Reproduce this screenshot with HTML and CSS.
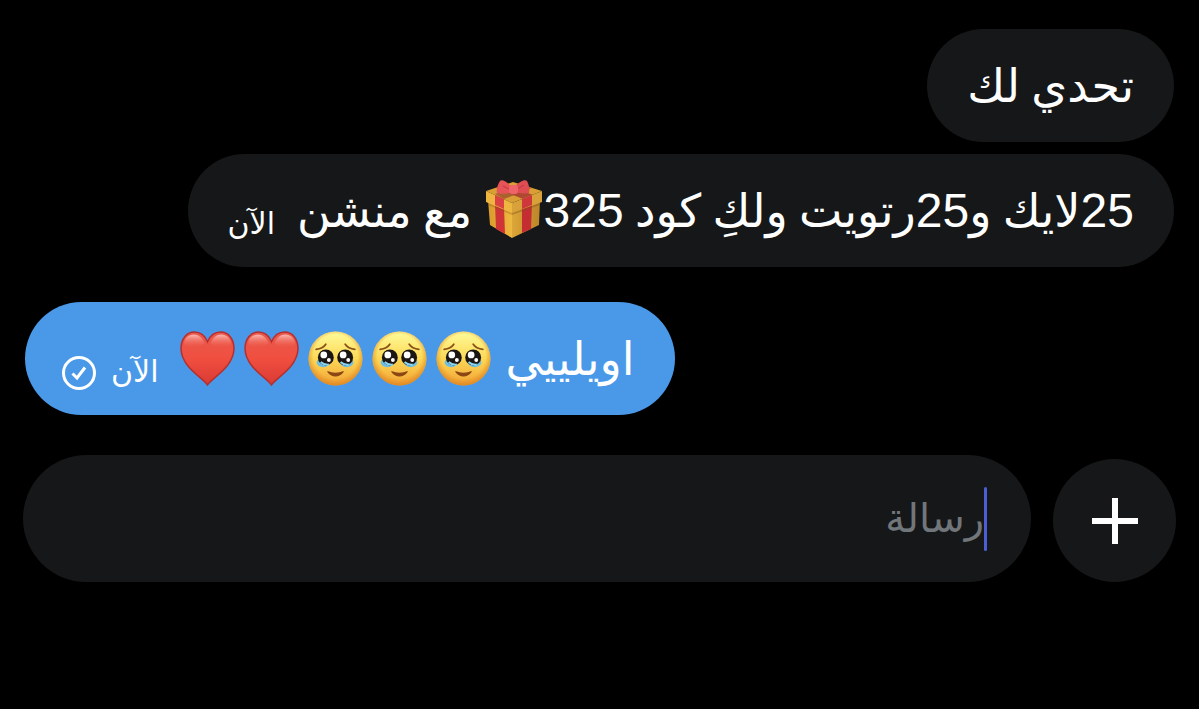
FILE: index.html
```html
<!DOCTYPE html>
<html lang="ar" dir="rtl">
<head>
    <meta charset="UTF-8">
    <meta name="viewport" content="width=device-width, initial-scale=1.0">
    <title>رسالة</title>
    <link rel="stylesheet" href="styles.css">
</head>
<body>

<svg class="sprites" aria-hidden="true">
    <defs>
        <linearGradient id="face-fill" x1="0" y1="0" x2="0" y2="1">
            <stop offset="0" stop-color="#fffb9a"/>
            <stop offset="0.5" stop-color="#fcd956"/>
            <stop offset="1" stop-color="#f3a234"/>
        </linearGradient>
        <radialGradient id="face-edge" cx="0.5" cy="0.46" r="0.54">
            <stop offset="0.75" stop-color="#e58b23" stop-opacity="0"/>
            <stop offset="1" stop-color="#d9821f" stop-opacity="0.8"/>
        </radialGradient>
        <linearGradient id="heart-fill" x1="0" y1="0" x2="0" y2="1">
            <stop offset="0" stop-color="#e8594e"/>
            <stop offset="0.5" stop-color="#f04f3f"/>
            <stop offset="1" stop-color="#d93a33"/>
        </linearGradient>
        <linearGradient id="heart-shine" x1="0" y1="0" x2="0" y2="1">
            <stop offset="0" stop-color="#ffd0ca" stop-opacity="0.8"/>
            <stop offset="1" stop-color="#f4604f" stop-opacity="0"/>
        </linearGradient>
        <linearGradient id="box-left" x1="0" y1="0" x2="1" y2="0">
            <stop offset="0" stop-color="#d99b2b"/>
            <stop offset="1" stop-color="#efb940"/>
        </linearGradient>
        <linearGradient id="box-right" x1="0" y1="0" x2="1" y2="0">
            <stop offset="0" stop-color="#dca638"/>
            <stop offset="1" stop-color="#bc862a"/>
        </linearGradient>
    </defs>

    <symbol id="face" viewBox="0 0 54 54">
        <circle cx="27" cy="27" r="26.5" fill="url(#face-fill)"/>
        <circle cx="27" cy="27" r="26.5" fill="url(#face-edge)"/>
        <ellipse cx="15" cy="31" rx="6.500" ry="4.500" fill="#6cbfe0"/>
        <ellipse cx="38" cy="31" rx="6.500" ry="4.500" fill="#6cbfe0"/>
        <g fill="#1b1513">
            <circle cx="17.5" cy="26" r="7.800"/>
            <circle cx="36.5" cy="26" r="7.800"/>
        </g>
        <g fill="#fff">
            <circle cx="15.500" cy="23.500" r="3.300"/>
            <circle cx="34.500" cy="23.500" r="3.300"/>
            <circle cx="20.500" cy="28.500" r="1.900"/>
            <circle cx="39.500" cy="28.500" r="1.900"/>
        </g>
        <path d="M12.500 30.500q3 3 8 2.500M32 30.500q3 3 8 2.500" fill="none" stroke="#8ed5f5" stroke-width="2"/>
        <path d="M8 18c4-.4 7.500-2 9.500-5M46 18c-4-.4-7.500-2-9.500-5" fill="none" stroke="#8a4f16" stroke-width="1.700" stroke-linecap="round"/>
        <path d="M19.500 40c4 5.500 11 5.500 15 0c-4 2-11 2-15 0z" fill="#8a4515" stroke="#8a4515" stroke-width="1.200" stroke-linejoin="round"/>
    </symbol>

    <symbol id="heart" viewBox="0 0 54 54">
        <path d="M27 53C23 46 1.500 36 1 17.500C1 7 7 1 14 1c6 0 10.500 3.500 13 9.500C29.500 4.500 34 1 40 1C47 1 53 7 53 17.500C52.500 36 31 46 27 53z" fill="url(#heart-fill)" stroke="#b5302e" stroke-width="1.500"/>
        <path d="M4 13C4 7 8.500 3.500 13.500 3.500C18 3.500 22 6.500 24 12C20 17 8 18 4 13z" fill="url(#heart-shine)"/>
        <path d="M50 13C50 7 45.500 3.500 40.500 3.500C36 3.500 32 6.500 30 12C34 17 46 18 50 13z" fill="url(#heart-shine)"/>
    </symbol>

    <symbol id="gift" viewBox="0 0 58 60">
        <path d="M3 21L27 31v28L5 46z" fill="url(#box-left)"/>
        <path d="M27 31L55 21L54 46L27 59z" fill="url(#box-right)"/>
        <path d="M10 25l9 4l1 26l-9-5z" fill="#cf3436"/>
        <path d="M37 29l10-4l-1 25l-9 4z" fill="#c42e32"/>
        <path d="M1 12L28 3L57 12L27 24z" fill="#d99e34"/>
        <path d="M10 15L37 6l10 3L19 20z" fill="#a9622d"/>
        <path d="M11 9L20 5L48 16L38 20z" fill="#ad4930"/>
        <path d="M1 12L27 24v10L1 23z" fill="#eeb641"/>
        <path d="M27 24L57 12v11L27 34z" fill="#d9a139"/>
        <path d="M10 16l9 4v10l-9-4z" fill="#db4042"/>
        <path d="M37 20l10-4v10l-10 4z" fill="#cf383b"/>
        <path d="M27 34l28-10v2L27 36z" fill="#83531b" opacity="0.4"/>
        <path d="M3 24l24 10v2L3 26z" fill="#83531b" opacity="0.3"/>
        <path d="M27 8C22 3 17 0 15 2c-2 3-4 8-3 12c4 2 12 0 16-1z" fill="#e75458"/>
        <path d="M29 8C35 2 40 0 42 2c2 4 3 8 2 12c-4 1-11 0-15-1z" fill="#df4d53"/>
        <path d="M18 7l6 3M39 6l-7 4" stroke="#c23e46" stroke-width="1.200" fill="none"/>
        <rect x="24" y="6" width="9" height="9" rx="3" fill="#ef6468"/>
    </symbol>
</svg>

<main class="chat">
    <div class="messages">
        <div class="bubble received">
            <span class="text">تحدي لك</span>
        </div>

        <div class="bubble received">
            <span class="text"><span class="number">25</span>لايك و<span class="number">25</span>رتويت ولكِ كود <span class="number">325</span><svg class="gift" role="img" aria-label="هدية"><use href="#gift"/></svg> مع منشن</span>
            <span class="time">الآن</span>
        </div>

        <div class="bubble sent">
            <span class="text">اويلييي</span>
            <span class="emojis">
                <svg class="emoji" role="img" aria-label="وجه"><use href="#face"/></svg>
                <svg class="emoji" role="img" aria-label="وجه"><use href="#face"/></svg>
                <svg class="emoji" role="img" aria-label="وجه"><use href="#face"/></svg>
                <svg class="emoji" role="img" aria-label="قلب"><use href="#heart"/></svg>
                <svg class="emoji" role="img" aria-label="قلب"><use href="#heart"/></svg>
            </span>
            <span class="time">الآن</span>
            <svg class="status" viewBox="0 0 36 36" role="img" aria-label="تم الإرسال">
                <circle cx="18" cy="18" r="15.500"/>
                <path d="M11.500 18.500l4.500 4.500l8-10.500"/>
            </svg>
        </div>
    </div>

    <form class="composer">
        <button class="add-button" type="button" aria-label="إضافة">
            <svg viewBox="0 0 46 46" aria-hidden="true"><path d="M23 0v46M0 23h46"/></svg>
        </button>
        <div class="field">
            <span class="caret"></span>
            <input type="text" class="message-input" placeholder="رسالة" aria-label="رسالة">
        </div>
    </form>
</main>

</body>
</html>
```
FILE: styles.css
```css
* {
    box-sizing: border-box;
}
body {
    margin: 0;
    background-color: #000;
    color: #fff;
    font-family: Roboto, "DejaVu Sans", sans-serif;
}
.sprites {
    position: absolute;
    width: 0;
    height: 0;
}
.chat {
    padding: 29px 23px;
}
.messages {
    display: flex;
    flex-direction: column;
    align-items: flex-start;
    gap: 12px;
    padding: 0 2px;
}
.bubble {
    display: flex;
    align-items: center;
    min-height: 113px;
    max-width: 100%;
    padding: 0 40px;
    border-radius: 57px;
}
.received {
    background-color: #161718;
}
.sent {
    align-self: flex-end;
    margin-top: 23px;
    padding-left: 36px;
    background-color: #4a99e9;
}
.text {
    font-size: 46px;
    line-height: 64px;
    white-space: nowrap;
}
.number {
    font-family: "Liberation Sans", Arial, sans-serif;
    font-size: 48px;
    line-height: 48px;
}
.time {
    margin-right: 22px;
    padding-top: 26px;
    font-size: 30px;
    line-height: 40px;
}
.gift {
    width: 60px;
    height: 60px;
    vertical-align: -12px;
}
.emojis {
    display: flex;
    gap: 9px;
    margin-right: 14px;
}
.emoji {
    width: 55px;
    height: 55px;
}
.status {
    width: 36px;
    height: 36px;
    margin-top: 28px;
    margin-right: 14px;
    fill: none;
    stroke: #fff;
    stroke-width: 3;
}
.composer {
    display: flex;
    align-items: flex-end;
    gap: 22px;
    margin-top: 40px;
}
.add-button {
    display: flex;
    align-items: center;
    justify-content: center;
    flex: none;
    width: 123px;
    height: 123px;
    border: none;
    border-radius: 50%;
    background-color: #161718;
    cursor: pointer;
}
.add-button svg {
    width: 46px;
    height: 46px;
    stroke: #fff;
    stroke-width: 6;
}
.field {
    display: flex;
    align-items: center;
    flex: 1;
    min-width: 0;
    height: 127px;
    padding: 0 44px;
    border-radius: 64px;
    background-color: #161718;
}
.caret {
    width: 3px;
    height: 64px;
    border-radius: 2px;
    background-color: #4a5fd6;
}
.message-input {
    flex: 1;
    min-width: 0;
    padding: 0;
    border: none;
    outline: none;
    background: none;
    color: #fff;
    font-family: inherit;
    font-size: 40px;
    line-height: 64px;
}
.message-input::placeholder {
    color: #71767b;
    opacity: 1;
}
```
